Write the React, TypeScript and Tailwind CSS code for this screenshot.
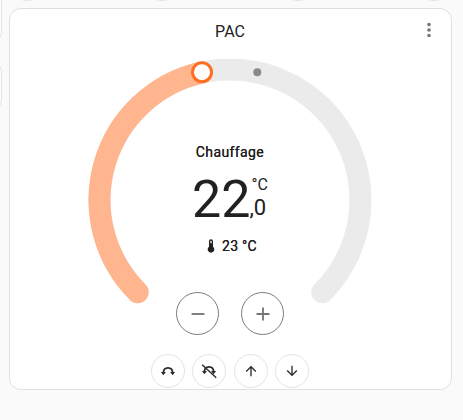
import React from "react";

const polar = (deg: number, r = 130.5) => {
  const a = (deg * Math.PI) / 180;
  return [141 + r * Math.cos(a), 141 + r * Math.sin(a)];
};
const arc = (from: number, to: number) => {
  const [x1, y1] = polar(from);
  const [x2, y2] = polar(to);
  return `M${x1} ${y1}A130.5 130.5 0 ${to - from > 180 ? 1 : 0} 1 ${x2} ${y2}`;
};

function Gauge() {
  return (
    <svg width="304" height="282" viewBox="-11 0 304 282" className="block">
      <path d={arc(135, 405)} fill="none" stroke="#ebebeb" strokeWidth="22" strokeLinecap="round" />
      <path d={arc(135, 257.6)} fill="none" stroke="#ffb68f" strokeWidth="22" strokeLinecap="round" />
      <circle cx="168.3" cy="13.3" r="4" fill="#8a8a8a" />
      <circle cx="113" cy="13.2" r="9.5" fill="#fff" stroke="#ff6f22" strokeWidth="3" />
    </svg>
  );
}

function Small({ children, extra = "" }: { children: React.ReactNode; extra?: string }) {
  return (
    <div className={`w-[34px] h-[34px] rounded-full border border-[#e3e3e3] flex items-center justify-center text-[#2a2a2a] ${extra}`}>
      {children}
    </div>
  );
}

function Round({ children }: { children: React.ReactNode }) {
  return (
    <div className="w-[43px] h-[43px] rounded-full border border-[#7a7a7a] flex items-center justify-center text-[#757575]">
      {children}
    </div>
  );
}

const Sym = ({ d, size = 22 }: { d: string; size?: number }) => (
  <svg width={size} height={size} viewBox="0 0 24 24" fill="currentColor"><path d={d} /></svg>
);

const SwapArc = () => (
  <svg width="16" height="16" viewBox="0 0 16 16" fill="none" stroke="currentColor" strokeWidth="1.8">
    <path d="M3.4 10C3.4 6.6 5 4.9 8 4.9s4.6 1.7 4.6 5.1" />
    <path d="M0.9 9h5l-2.5 3.2zM10.1 9h5l-2.5 3.2z" fill="currentColor" stroke="none" />
  </svg>
);

const SwapOff = () => (
  <svg width="18" height="18" viewBox="0 0 18 18" fill="none" stroke="currentColor" strokeWidth="1.8">
    <path d="M4.4 10C4.4 6.6 6 4.9 9 4.9s4.6 1.7 4.6 5.1" />
    <path d="M1.9 9h5l-2.5 3.2zM11.1 9h5l-2.5 3.2z" fill="currentColor" stroke="none" />
    <path d="M2.2 2.7L16.2 15.7" strokeWidth="1.4" />
  </svg>
);

const Peek = ({ cls }: { cls: string }) => (
  <div className={`absolute top-[-33px] w-[34px] h-[34px] rounded-full border border-[#e3e3e3] ${cls}`} />
);

export default function App() {
  return (
    <div className="relative w-[463px] h-[420px] overflow-hidden bg-[#fafafa] [font-family:Roboto,sans-serif] pt-2 pl-[9px]">
      <Peek cls="left-[10px]" />
      <Peek cls="left-[145px]" />
      <Peek cls="left-[281px]" />
      <Peek cls="left-[417px]" />
      <div className="absolute left-[-20px] top-[-20px] w-[22px] h-[63px] rounded-xl border border-[#e3e3e3] bg-white" />
      <div className="absolute left-[-20px] top-[61px] w-[22px] h-[50px] rounded-xl border border-[#e3e3e3] bg-white" />
      <div className="relative w-[443px] h-[382px] rounded-xl border border-[#e0e0e0] bg-white flex flex-col items-center pr-[1px]">
        <div className="w-full h-[45px] flex items-center justify-center relative">
          <span className="text-[16px] leading-none text-[#212121] mt-[1px]">PAC</span>
          <svg width="22" height="22" viewBox="0 0 24 24" fill="#757575" className="absolute right-[10px] top-[10px]">
            <path d="M12 16a2 2 0 0 1 2 2 2 2 0 0 1-2 2 2 2 0 0 1-2-2 2 2 0 0 1 2-2m0-6a2 2 0 0 1 2 2 2 2 0 0 1-2 2 2 2 0 0 1-2-2 2 2 0 0 1 2-2m0-6a2 2 0 0 1 2 2 2 2 0 0 1-2 2 2 2 0 0 1-2-2 2 2 0 0 1 2-2z" />
          </svg>
        </div>
        <div className="relative mt-[5px] h-[233px]">
          <Gauge />
          <div className="absolute left-0 right-0 top-[83px] flex flex-col items-center text-[#212121]">
            <div className="text-[14px] leading-5 font-normal tracking-[0.4px] [text-shadow:0_0_0.2px_#212121]">Chauffage</div>
            <div className="flex items-start mt-[9px] h-[58px]">
              <span className="text-[52px] leading-[58px]">22</span>
              <span className="flex flex-col ml-[1px]">
                <span className="text-[16px] leading-5 mt-[4px]">°C</span>
                <span className="text-[22px] leading-6 -ml-[2px] mt-[1px]">,0</span>
              </span>
            </div>
            <div className="flex items-center mt-[7px] text-[14px] leading-5 font-normal tracking-[0.3px] [text-shadow:0_0_0.2px_#212121]">
              <svg width="16" height="16" viewBox="0 0 24 24" fill="#212121" className="mr-[3px]">
                <path d="M15 13V5A3 3 0 0 0 9 5V13A5 5 0 1 0 15 13M12 4A1 1 0 0 1 13 5V8H11V5A1 1 0 0 1 12 4Z" />
              </svg>
              23 °C
            </div>
          </div>
        </div>
        <div className="flex gap-[22px]">
          <Round><Sym d="M19 13H5v-2h14z" /></Round>
          <Round><Sym d="M19 13h-6v6h-2v-6H5v-2h6V5h2v6h6z" /></Round>
        </div>
        <div className="flex gap-[7px] mt-[19px]">
          <Small><SwapArc /></Small>
          <Small><SwapOff /></Small>
          <Small extra="ml-[1px]"><Sym size={16} d="M13 20h-2V8l-5.5 5.5-1.42-1.42L12 4.16l7.92 7.92-1.42 1.42L13 8z" /></Small>
          <Small><Sym size={16} d="M11 4h2v12l5.5-5.5 1.42 1.42L12 19.84l-7.92-7.92L5.5 10.5 11 16z" /></Small>
        </div>
      </div>
    </div>
  );
}
